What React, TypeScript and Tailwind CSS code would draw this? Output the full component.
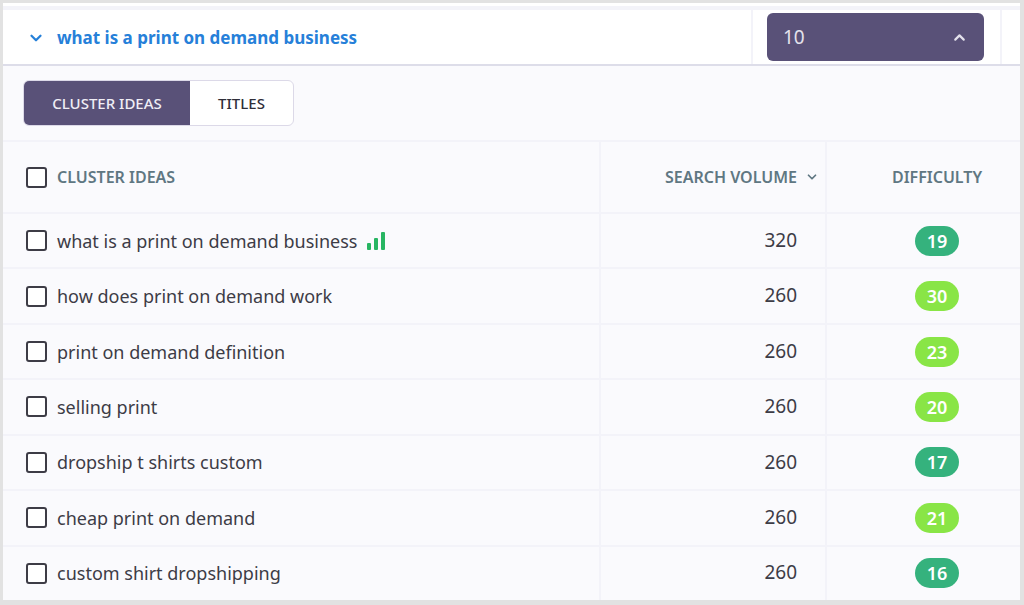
import { useState } from 'react';
import { ChevronDown, ChevronUp } from 'lucide-react';
import clsx from 'clsx';

interface Keyword {
  phrase: string;
  volume: number;
  difficulty: number;
  ranking?: boolean;
}

const KEYWORDS: Keyword[] = [
  { phrase: 'what is a print on demand business', volume: 320, difficulty: 19, ranking: true },
  { phrase: 'how does print on demand work', volume: 260, difficulty: 30 },
  { phrase: 'print on demand definition', volume: 260, difficulty: 23 },
  { phrase: 'selling print', volume: 260, difficulty: 20 },
  { phrase: 'dropship t shirts custom', volume: 260, difficulty: 17 },
  { phrase: 'cheap print on demand', volume: 260, difficulty: 21 },
  { phrase: 'custom shirt dropshipping', volume: 260, difficulty: 16 },
];

const CHECKBOX =
  'size-[21px] shrink-0 appearance-none rounded-[3px] border-2 border-[#3d3c46] bg-white checked:bg-[#595178]';

function BarsIcon() {
  return (
    <svg width="18" height="18" viewBox="0 0 18 18" fill="#27b562" aria-hidden="true">
      <rect x="0" y="11" width="4" height="7" rx="1" />
      <rect x="7" y="6" width="4" height="12" rx="1" />
      <rect x="14" y="0" width="4" height="18" rx="1" />
    </svg>
  );
}

function DifficultyPill({ value }: { value: number }) {
  return (
    <span
      className={clsx(
        'inline-flex h-[30px] w-11 items-center justify-center rounded-full text-lg font-semibold text-white',
        value < 20 ? 'bg-[#35b27d]' : 'bg-[#89e546]',
      )}
    >
      {value}
    </span>
  );
}

export default function App() {
  const [tab, setTab] = useState('ideas');
  const [open, setOpen] = useState(true);
  const [selected, setSelected] = useState<string[]>([]);

  const toggle = (phrase: string) =>
    setSelected((prev) =>
      prev.includes(phrase) ? prev.filter((p) => p !== phrase) : [...prev, phrase],
    );

  return (
    <main className="flex min-h-screen flex-col border-3 border-r-4 border-b-5 border-[#e2e2e2] bg-[#fafafd] font-['Noto_Sans',sans-serif] text-[#3d3c46]">
      {/* Cluster header */}
      <header className="border-b-2 border-[#dddde9] bg-white">
        <div className="mt-[3px] h-1 bg-[#f3f3f9]" />
        <div className="flex h-[54px] items-stretch">
          <div className="flex flex-1 items-center gap-3 pt-0.5 pl-6 text-[#2680d9]">
            <ChevronDown size={18} strokeWidth={3} />
            <a href="#cluster" className="text-[17px] font-bold">
              what is a print on demand business
            </a>
          </div>
          <div className="flex items-center border-x-2 border-[#f3f3f9] pr-4 pl-3.5">
            <button
              type="button"
              aria-expanded={open}
              onClick={() => setOpen(!open)}
              className="flex h-12 w-[217px] items-center justify-between rounded-md bg-[#595178] px-4 text-[19px] text-[#e4e2ec]"
            >
              10
              <ChevronUp size={17} strokeWidth={3} />
            </button>
          </div>
          <div className="w-[18px]" />
        </div>
      </header>

      {/* Tabs */}
      <div className="flex h-[74px] items-center px-5">
        <div className="flex h-[46px] overflow-hidden rounded-md border border-[#dcd9e8] bg-white text-[15px] font-medium">
          <button
            type="button"
            onClick={() => setTab('ideas')}
            className={clsx('w-[166px]', tab === 'ideas' ? 'bg-[#595178] text-[#efedf5]' : 'text-[#2f2e38]')}
          >
            CLUSTER IDEAS
          </button>
          <button
            type="button"
            onClick={() => setTab('titles')}
            className={clsx('w-[103px]', tab === 'titles' ? 'bg-[#595178] text-[#efedf5]' : 'text-[#2f2e38]')}
          >
            TITLES
          </button>
        </div>
      </div>

      <table className="w-full flex-1 table-fixed border-separate border-spacing-0 text-lg">
        <thead className="text-base text-[#5f7782]">
          <tr className="h-[72px]">
            <th className="border-t-2 border-[#f3f3f9] p-0 pl-[23px] text-left font-semibold">
              <label className="flex items-center gap-2.5">
                <input
                  type="checkbox"
                  className={CHECKBOX}
                  checked={selected.length === KEYWORDS.length}
                  onChange={(e) => setSelected(e.target.checked ? KEYWORDS.map((k) => k.phrase) : [])}
                />
                CLUSTER IDEAS
              </label>
            </th>
            <th className="w-[226px] border-t-2 border-l-2 border-[#f3f3f9] p-0 pr-1.5 font-semibold">
              <button type="button" className="flex w-full items-center justify-end gap-2">
                SEARCH VOLUME
                <ChevronDown size={14} strokeWidth={3} />
              </button>
            </th>
            <th className="w-[195px] border-t-2 border-l-2 border-[#f3f3f9] p-0 pl-[27px] text-center font-semibold">
              DIFFICULTY
            </th>
          </tr>
        </thead>
        <tbody>
          {KEYWORDS.map((k) => (
            <tr key={k.phrase} className="h-[55px]">
              <td className="border-t-2 border-[#f3f3f9] p-0 pl-[23px]">
                <label className="flex items-center gap-2.5">
                  <input
                    type="checkbox"
                    className={CHECKBOX}
                    checked={selected.includes(k.phrase)}
                    onChange={() => toggle(k.phrase)}
                  />
                  {k.phrase}
                  {k.ranking && <BarsIcon />}
                </label>
              </td>
              <td className="border-t-2 border-l-2 border-[#f3f3f9] p-0 pr-7 text-right text-[19px]">
                {k.volume}
              </td>
              <td className="border-t-2 border-l-2 border-[#f3f3f9] p-0 pl-[27px] text-center">
                <DifficultyPill value={k.difficulty} />
              </td>
            </tr>
          ))}
        </tbody>
      </table>
    </main>
  );
}
